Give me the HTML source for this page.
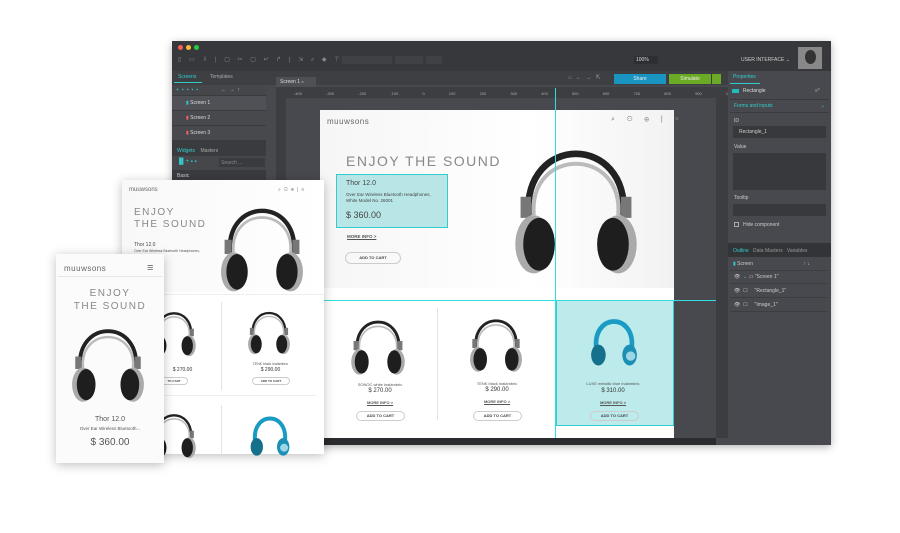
<!DOCTYPE html>
<html><head><meta charset="utf-8"><style>
*{margin:0;padding:0;box-sizing:border-box}
body{width:900px;height:533px;background:#fff;position:relative;overflow:hidden;font-family:"Liberation Sans",sans-serif}
.a{position:absolute}
.t{font-size:5px;color:#ccc}
.tl{color:#888;letter-spacing:1.5px;font-weight:300}
.btn{border:1px solid #ccc;border-radius:8px;font-size:4px;font-weight:bold;color:#444;text-align:center}
.h{color:#333;text-align:center}
</style></head><body>
<svg width="0" height="0" style="position:absolute"><defs>
<symbol id="hp" viewBox="0 0 100 110">
<path d="M14 62 C10 0 90 0 86 62" fill="none" stroke="#222" stroke-width="5"/>
<path d="M18 62 C14 10 86 10 82 62" fill="none" stroke="#bbb" stroke-width="3"/>
<rect x="8" y="48" width="8" height="16" fill="#777"/><rect x="84" y="48" width="8" height="16" fill="#777"/>
<ellipse cx="18" cy="84" rx="14" ry="22" fill="#aaa"/><ellipse cx="82" cy="84" rx="14" ry="22" fill="#aaa"/>
<ellipse cx="22" cy="84" rx="12" ry="20" fill="#1e1e1e"/><ellipse cx="78" cy="84" rx="12" ry="20" fill="#1e1e1e"/>
</symbol>
<symbol id="hpb" viewBox="0 0 100 110">
<path d="M16 70 C8 0 92 0 84 70" fill="none" stroke="#1a9bc4" stroke-width="9"/>
<ellipse cx="20" cy="82" rx="14" ry="20" fill="#15708c"/><ellipse cx="80" cy="82" rx="14" ry="20" fill="#1b8fb4"/>
<circle cx="82" cy="84" r="9" fill="#9fd6e6"/>
</symbol>
</defs></svg>

<!-- main window -->
<div class="a" style="left:172px;top:41px;width:659px;height:404px;background:#48494e;box-shadow:0 2px 8px rgba(0,0,0,.3)"></div>
<div class="a" style="left:172px;top:41px;width:659px;height:30px;background:#37383b"></div>
<div class="a" style="left:178px;top:45px;width:5px;height:5px;border-radius:50%;background:#fc5f57"></div>
<div class="a" style="left:186px;top:45px;width:5px;height:5px;border-radius:50%;background:#fdbc2e"></div>
<div class="a" style="left:194px;top:45px;width:5px;height:5px;border-radius:50%;background:#28c840"></div>
<div class="a t" style="left:178px;top:56px;color:#888;font-size:6px;letter-spacing:3px">▯ ▭ ⇩ | ▢ ✂ ▢ ↵ ↱ | ⇲ ⌕ ◆ ⊤ ⊤</div>
<div class="a" style="left:342px;top:56px;width:50px;height:8px;background:#404145"></div>
<div class="a" style="left:395px;top:56px;width:28px;height:8px;background:#404145"></div>
<div class="a" style="left:426px;top:56px;width:16px;height:8px;background:#404145"></div>
<div class="a" style="left:634px;top:56px;width:24px;height:8px;background:#2e2f32;color:#ddd;font-size:5px;padding:1px 2px">100%</div>
<div class="a" style="left:741px;top:57px;color:#ccc;font-size:5px">USER INTERFACE ⌄</div>
<div class="a" style="left:798px;top:47px;width:24px;height:22px;background:#888"></div>
<div class="a" style="left:805px;top:50px;width:11px;height:14px;border-radius:50%;background:#333"></div>
<!-- second row -->
<div class="a" style="left:172px;top:71px;width:659px;height:14px;background:#3e3f43"></div>
<div class="a" style="left:178px;top:74px;font-size:5px;color:#3cc"> Screens</div>
<div class="a" style="left:174px;top:82px;width:28px;height:1px;background:#3cc"></div>
<div class="a" style="left:210px;top:74px;font-size:5px;color:#aaa">Templates</div>
<div class="a" style="left:276px;top:77px;width:40px;height:10px;background:#4f5055;font-size:5px;color:#ddd;padding:2px 4px">Screen 1 <span style="font-size:4px">×</span></div>
<div class="a" style="left:568px;top:74px;font-size:6px;color:#999;letter-spacing:4px">⌂←→⇱</div>
<div class="a" style="left:614px;top:74px;width:52px;height:10px;background:#1a94c0;color:#eee;font-size:5px;text-align:center;line-height:10px">Share</div>
<div class="a" style="left:669px;top:74px;width:42px;height:10px;background:#6aaa24;color:#eee;font-size:5px;text-align:center;line-height:10px">Simulate</div>
<div class="a" style="left:712px;top:74px;width:9px;height:10px;background:#6aaa24"></div>
<!-- left panel -->
<div class="a" style="left:172px;top:85px;width:94px;height:360px;background:#3a3b3f"></div>
<div class="a" style="left:172px;top:85px;width:94px;height:10px;background:#46474b;font-size:5px;color:#3cc;padding:2px 4px;letter-spacing:3px">+▪▪▪▪ <span style="color:#ccc;margin-left:16px">←→↑</span></div>
<div class="a" style="left:172px;top:96px;width:94px;height:14px;background:#505156;font-size:5px;color:#ddd;padding:4px 14px"><span style="color:#3cc">▮</span> Screen 1</div>
<div class="a" style="left:172px;top:111px;width:94px;height:14px;background:#48494d;font-size:5px;color:#ddd;padding:4px 14px"><span style="color:#e66">▮</span> Screen 2</div>
<div class="a" style="left:172px;top:126px;width:94px;height:14px;background:#48494d;font-size:5px;color:#ddd;padding:4px 14px"><span style="color:#e66">▮</span> Screen 3</div>
<div class="a" style="left:177px;top:148px;font-size:5px;color:#3cc">Widgets <span style="color:#aaa;margin-left:4px">Masters</span></div>
<div class="a" style="left:172px;top:156px;width:94px;height:14px;background:#46474b;font-size:6px;color:#3cc;padding:3px 5px">▐▌+ ▪ ▪</div>
<div class="a" style="left:219px;top:158px;width:46px;height:9px;background:#3a3b3f;font-size:5px;color:#888;padding:2px">Search ...</div>
<div class="a" style="left:177px;top:173px;font-size:5px;color:#ccc">Basic</div>
<!-- ruler & canvas -->
<div class="a" style="left:276px;top:87px;width:452px;height:11px;background:#3d3e42;font-size:4px;color:#aaa;padding:4px 18px;word-spacing:23px;white-space:nowrap;overflow:hidden">-400 -300 -200 -100 0 100 200 300 400 500 600 700 800 900 1000 1100 1200 1300 1400</div>
<div class="a" style="left:276px;top:98px;width:10px;height:347px;background:#3d3e42"></div>
<div class="a" style="left:716px;top:98px;width:12px;height:340px;background:#3c3d41"></div>
<!-- white page -->
<div class="a" style="left:320px;top:110px;width:354px;height:328px;background:#fff"></div>
<div class="a" style="left:320px;top:110px;width:354px;height:178px;background:linear-gradient(90deg,#f6f6f6,#fff 60%,#f2f2f2)"></div>
<div class="a" style="left:327px;top:117px;font-size:8px;color:#666;letter-spacing:.5px">muuwsons</div>
<div class="a" style="left:611px;top:116px;font-size:7px;color:#777;letter-spacing:5px">⌕ ⚇ ⊕ | ≡</div>
<div class="a tl" style="left:346px;top:153px;font-size:14px">ENJOY THE SOUND</div>
<div class="a" style="left:336px;top:174px;width:112px;height:54px;background:#b8e6e6;border:1px solid #3cc"></div>
<div class="a" style="left:346px;top:180px;font-size:7px;color:#444">Thor 12.0</div>
<div class="a" style="left:346px;top:192px;font-size:4.5px;color:#444;line-height:6px">Over Ear Wireless Bluetooth Headphones,<br>White Model No. 26001</div>
<div class="a" style="left:346px;top:210px;font-size:9px;color:#444">$ 360.00</div>
<div class="a" style="left:347px;top:234px;font-size:4.5px;font-weight:bold;color:#555;text-decoration:underline">MORE INFO &gt;</div>
<div class="a btn" style="left:345px;top:252px;width:56px;height:12px;line-height:10px">ADD TO CART</div>
<svg class="a" style="left:510px;top:132px" width="132" height="148"><use href="#hp"/></svg>
<!-- products -->
<div class="a" style="left:437px;top:308px;width:1px;height:112px;background:#e4e4e4"></div>
<div class="a" style="left:556px;top:300px;width:118px;height:126px;background:#bdeaea;border:1px solid #3cc"></div>
<svg class="a" style="left:347px;top:313px" width="62" height="64"><use href="#hp"/></svg>
<svg class="a" style="left:463px;top:312px" width="66" height="62"><use href="#hp"/></svg>
<svg class="a" style="left:588px;top:310px" width="52" height="62"><use href="#hpb"/></svg>
<div class="a" style="left:340px;top:382px;width:80px;font-size:4px;color:#555;text-align:center">SONOC white inalámbric</div>
<div class="a h" style="left:340px;top:388px;width:80px;font-size:6px">$ 270.00</div>
<div class="a" style="left:340px;top:400px;width:80px;font-size:4px;font-weight:bold;color:#555;text-align:center;text-decoration:underline">MORE INFO &gt;</div>
<div class="a btn" style="left:356px;top:411px;width:49px;height:10px;line-height:8px">ADD TO CART</div>
<div class="a" style="left:457px;top:381px;width:80px;font-size:4px;color:#555;text-align:center">TENK black inalámbric</div>
<div class="a h" style="left:457px;top:387px;width:80px;font-size:6px">$ 290.00</div>
<div class="a" style="left:457px;top:399px;width:80px;font-size:4px;font-weight:bold;color:#555;text-align:center;text-decoration:underline">MORE INFO &gt;</div>
<div class="a btn" style="left:473px;top:411px;width:49px;height:10px;line-height:8px">ADD TO CART</div>
<div class="a" style="left:573px;top:381px;width:80px;font-size:4px;color:#555;text-align:center">LUXE metallic blue inalámbric</div>
<div class="a h" style="left:573px;top:388px;width:80px;font-size:6px">$ 310.00</div>
<div class="a" style="left:573px;top:400px;width:80px;font-size:4px;font-weight:bold;color:#555;text-align:center;text-decoration:underline">MORE INFO &gt;</div>
<div class="a btn" style="left:590px;top:411px;width:49px;height:10px;line-height:8px">ADD TO CART</div>
<div class="a" style="left:320px;top:300px;width:396px;height:1px;background:#3dd"></div>
<div class="a" style="left:555px;top:88px;width:1px;height:350px;background:#3dd"></div>
<div class="a" style="left:320px;top:438px;width:396px;height:7px;background:#2b2c2f"></div>
<!-- right panel -->
<div class="a" style="left:728px;top:71px;width:103px;height:374px;background:#48494e"></div>
<div class="a" style="left:733px;top:74px;font-size:5px;color:#3cc">Properties</div>
<div class="a" style="left:730px;top:83px;width:30px;height:1px;background:#3cc"></div>
<div class="a" style="left:732px;top:89px;width:7px;height:4px;background:#2bb;"></div>
<div class="a" style="left:743px;top:88px;font-size:5px;color:#ddd">Rectangle</div>
<div class="a" style="left:815px;top:88px;font-size:5px;color:#aaa">≡*</div>
<div class="a" style="left:730px;top:99px;width:99px;height:14px;border-top:1px solid #3a3b3f;border-bottom:1px solid #3a3b3f;font-size:5px;color:#3cc;padding:3px 4px">Forms and inputs<span style="float:right">⌄</span></div>
<div class="a" style="left:734px;top:118px;font-size:5px;color:#ccc">ID</div>
<div class="a" style="left:733px;top:126px;width:93px;height:12px;background:#38393c;font-size:5px;color:#ccc;padding:3px 6px">Rectangle_1</div>
<div class="a" style="left:734px;top:144px;font-size:5px;color:#ccc">Value</div>
<div class="a" style="left:733px;top:153px;width:93px;height:37px;background:#38393c"></div>
<div class="a" style="left:734px;top:195px;font-size:5px;color:#ccc">Tooltip</div>
<div class="a" style="left:733px;top:204px;width:93px;height:12px;background:#38393c"></div>
<div class="a" style="left:734px;top:222px;width:5px;height:5px;border:1px solid #aaa"></div>
<div class="a" style="left:743px;top:222px;font-size:5px;color:#ccc">Hide component</div>
<div class="a" style="left:728px;top:243px;width:103px;height:14px;background:#333437;font-size:5px;color:#999;padding:5px 5px"><span style="color:#3cc">Outline</span>&nbsp;&nbsp; Data Masters&nbsp;&nbsp; Variables</div>
<div class="a" style="left:733px;top:261px;font-size:5px;color:#ccc;width:95px"><span style="color:#3cc">▮</span> Screen<span style="float:right;margin-right:18px">↑ ↓</span></div>
<div class="a" style="left:730px;top:270px;width:97px;height:1px;background:#3c3d41"></div>
<div class="a" style="left:734px;top:274px;font-size:5px;color:#ccc">👁&nbsp; <span style="color:#3cc">⌄</span> ▭ "Screen 1"</div>
<div class="a" style="left:730px;top:283px;width:97px;height:1px;background:#3c3d41"></div>
<div class="a" style="left:734px;top:288px;font-size:5px;color:#ccc">👁&nbsp; ☐&nbsp;&nbsp;&nbsp;&nbsp; "Rectangle_1"</div>
<div class="a" style="left:730px;top:297px;width:97px;height:1px;background:#3c3d41"></div>
<div class="a" style="left:734px;top:302px;font-size:5px;color:#ccc">👁&nbsp; ☐&nbsp;&nbsp;&nbsp;&nbsp; "Image_1"</div>
<div class="a" style="left:730px;top:311px;width:97px;height:1px;background:#3c3d41"></div>

<!-- tablet mockup -->
<div class="a" style="left:122px;top:180px;width:202px;height:274px;background:#fff;box-shadow:0 2px 10px rgba(0,0,0,.25)"></div>
<div class="a" style="left:122px;top:180px;width:202px;height:112px;background:linear-gradient(90deg,#f8f8f8,#fff)"></div>
<div class="a" style="left:129px;top:187px;font-size:6px;color:#666">muuwsons</div>
<div class="a" style="left:278px;top:187px;font-size:5px;color:#888;letter-spacing:3px">⌕⚇⊕|≡</div>
<div class="a tl" style="left:134px;top:207px;font-size:10px;line-height:12px">ENJOY<br>THE SOUND</div>
<div class="a" style="left:134px;top:242px;font-size:5px;color:#444">Thor 12.0</div>
<div class="a" style="left:134px;top:249px;font-size:3.5px;color:#555">Over Ear Wireless Bluetooth Headphones,</div>
<svg class="a" style="left:214px;top:197px" width="96" height="98"><use href="#hp"/></svg>
<div class="a" style="left:122px;top:294px;width:202px;height:1px;background:#eee"></div>
<div class="a" style="left:221px;top:302px;width:1px;height:88px;background:#e4e4e4"></div>
<div class="a" style="left:165px;top:395px;width:151px;height:1px;background:#eee"></div>
<div class="a" style="left:221px;top:405px;width:1px;height:50px;background:#e4e4e4"></div>
<svg class="a" style="left:150px;top:306px" width="48" height="52"><use href="#hp"/></svg>
<svg class="a" style="left:243px;top:306px" width="52" height="50"><use href="#hp"/></svg>
<svg class="a" style="left:150px;top:408px" width="48" height="52"><use href="#hp"/></svg>
<svg class="a" style="left:248px;top:410px" width="44" height="50"><use href="#hpb"/></svg>
<div class="a" style="left:243px;top:362px;width:55px;font-size:3.5px;color:#555;text-align:center">TENK black inalámbric</div>
<div class="a h" style="left:243px;top:367px;width:55px;font-size:5px">$ 290.00</div>
<div class="a btn" style="left:252px;top:377px;width:38px;height:8px;line-height:6px;font-size:3px">ADD TO CART</div>
<div class="a h" style="left:165px;top:367px;width:35px;font-size:5px">$ 270.00</div>
<div class="a btn" style="left:160px;top:377px;width:28px;height:8px;line-height:6px;font-size:3px">TO CART</div>

<!-- phone mockup -->
<div class="a" style="left:56px;top:254px;width:108px;height:209px;background:#fbfbfb;box-shadow:0 2px 10px rgba(0,0,0,.25)"></div>
<div class="a" style="left:64px;top:264px;font-size:8px;color:#666;letter-spacing:.5px">muuwsons</div>
<div class="a" style="left:147px;top:262px;font-size:11px;color:#666">≡</div>
<div class="a" style="left:58px;top:276px;width:104px;height:1px;background:#e6e6e6"></div>
<div class="a tl" style="left:56px;top:287px;width:108px;text-align:center;font-size:10px;line-height:13px">ENJOY<br>THE SOUND</div>
<svg class="a" style="left:69px;top:318px" width="78" height="88"><use href="#hp"/></svg>
<div class="a" style="left:56px;top:416px;width:108px;text-align:center;font-size:7px;color:#555">Thor 12.0</div>
<div class="a" style="left:56px;top:426px;width:108px;text-align:center;font-size:4.5px;color:#555">Over Ear Wireless Bluetooth...</div>
<div class="a" style="left:56px;top:437px;width:108px;text-align:center;font-size:10px;color:#555">$ 360.00</div>
</body></html>
